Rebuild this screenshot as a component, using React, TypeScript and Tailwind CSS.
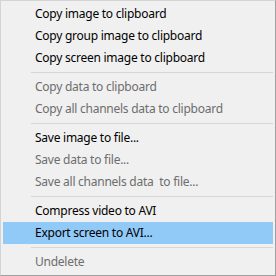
type Item = { label: string; disabled?: boolean; active?: boolean } | 'sep';

const ITEMS: Item[] = [
  { label: 'Copy image to clipboard' },
  { label: 'Copy group image to clipboard' },
  { label: 'Copy screen image to clipboard' },
  'sep',
  { label: 'Copy data to clipboard', disabled: true },
  { label: 'Copy all channels data to clipboard', disabled: true },
  'sep',
  { label: 'Save image to file...' },
  { label: 'Save data to file...', disabled: true },
  { label: 'Save all channels data  to file...', disabled: true },
  'sep',
  { label: 'Compress video to AVI' },
  { label: 'Export screen to AVI...', active: true },
  'sep',
  { label: 'Undelete', disabled: true },
];

export default function App() {
  return (
    <div
      className="h-[276px] w-[276px] border-t border-l border-t-[#d4d4d4] border-l-[#d4d4d4] border-r border-b border-r-[#a0a0a0] border-b-[#a0a0a0] bg-[#f0f0f0] px-[2px] py-[2px] text-[12px] tracking-[-0.25px] text-black"
      style={{ fontFamily: '"Segoe UI", "Noto Sans", sans-serif' }}
    >
      {ITEMS.map((item, i) =>
        item === 'sep' ? (
          <div key={i} className="flex h-[7px] items-center pl-[28px]">
            <div className="h-px w-full bg-[#d7d7d7]" />
          </div>
        ) : (
          <div
            key={i}
            className={`flex h-[22px] items-center whitespace-pre pl-[32px] ${
              item.active ? 'bg-[#91c9f7]' : ''
            } ${item.disabled ? 'text-[#6d6d6d]' : ''}`}
          >
            {item.label}
          </div>
        )
      )}
    </div>
  );
}
